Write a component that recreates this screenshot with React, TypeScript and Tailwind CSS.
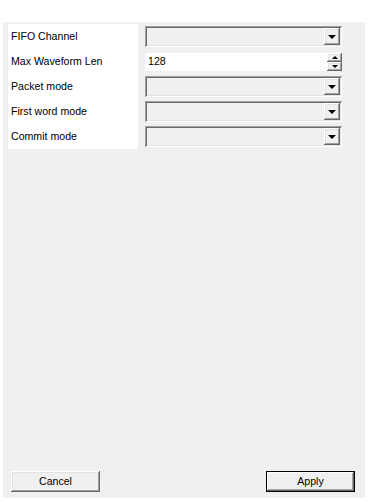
import * as React from "react";

const raised =
  "shadow-[inset_-1px_-1px_#696969,inset_1px_1px_#ffffff,inset_-2px_-2px_#a0a0a0,inset_2px_2px_#e3e3e3]";
const sunken =
  "shadow-[inset_1px_1px_#a0a0a0,inset_-1px_-1px_#ffffff,inset_2px_2px_#696969,inset_-2px_-2px_#e3e3e3]";

const labels = ["FIFO Channel", "Max Waveform Len", "Packet mode", "First word mode", "Commit mode"];

function Combo() {
  return (
    <div className={`flex h-[21px] w-[197px] items-center justify-end bg-[#f0f0f0] pr-[2px] ${sunken}`}>
      <div className={`flex h-[17px] w-[16px] items-center justify-center bg-[#f0f0f0] ${raised}`}>
        <div className="h-0 w-0 border-x-[4px] border-t-[4px] border-x-transparent border-t-black" />
      </div>
    </div>
  );
}

function Spinner({ value }: { value: string }) {
  return (
    <div className="flex h-[18px] w-[197px] items-center justify-between bg-white pl-[3px]">
      <span className="pt-[1px]">{value}</span>
      <div className="flex h-[18px] flex-col">
        <div className={`flex h-[9px] w-[15px] items-center justify-center bg-[#f0f0f0] ${raised}`}>
          <div className="h-0 w-0 border-x-[3px] border-b-[3px] border-x-transparent border-b-black" />
        </div>
        <div className={`flex h-[9px] w-[15px] items-center justify-center bg-[#f0f0f0] ${raised}`}>
          <div className="h-0 w-0 border-x-[3px] border-t-[3px] border-x-transparent border-t-black" />
        </div>
      </div>
    </div>
  );
}

function WinButton({ children, isDefault }: { children: React.ReactNode; isDefault?: boolean }) {
  return (
    <button
      type="button"
      className={`h-[21px] w-[89px] bg-[#f0f0f0] pt-[1px] text-center ${
        isDefault
          ? "shadow-[inset_0_0_0_1px_#000000,inset_-2px_-2px_#696969,inset_2px_2px_#ffffff,inset_-3px_-3px_#a0a0a0]"
          : raised
      }`}
    >
      {children}
    </button>
  );
}

export default function App() {
  return (
    <div
      className="h-[501px] w-[368px] bg-white pl-[3px] pt-[22px] text-[10.6px] text-black"
      style={{ fontFamily: '"Liberation Sans", Arial, sans-serif' }}
    >
      <div className="flex h-[476px] w-[362px] flex-col justify-between bg-[#f0f0f0]">
        <div className="flex gap-[7px] pl-[5px] pt-[2px]">
          <div className="flex w-[130px] flex-col bg-white">
            {labels.map((l) => (
              <div key={l} className="flex h-[25px] items-center pl-[3px] pt-[1px]">
                {l}
              </div>
            ))}
          </div>
          <div className="flex flex-col">
            {labels.map((l, i) => (
              <div key={l} className="flex h-[25px] items-center">
                {i === 1 ? <Spinner value="128" /> : <Combo />}
              </div>
            ))}
          </div>
        </div>
        <div className="flex justify-between pb-[6px] pl-[8px] pr-[10px]">
          <WinButton>Cancel</WinButton>
          <WinButton isDefault>Apply</WinButton>
        </div>
      </div>
    </div>
  );
}
